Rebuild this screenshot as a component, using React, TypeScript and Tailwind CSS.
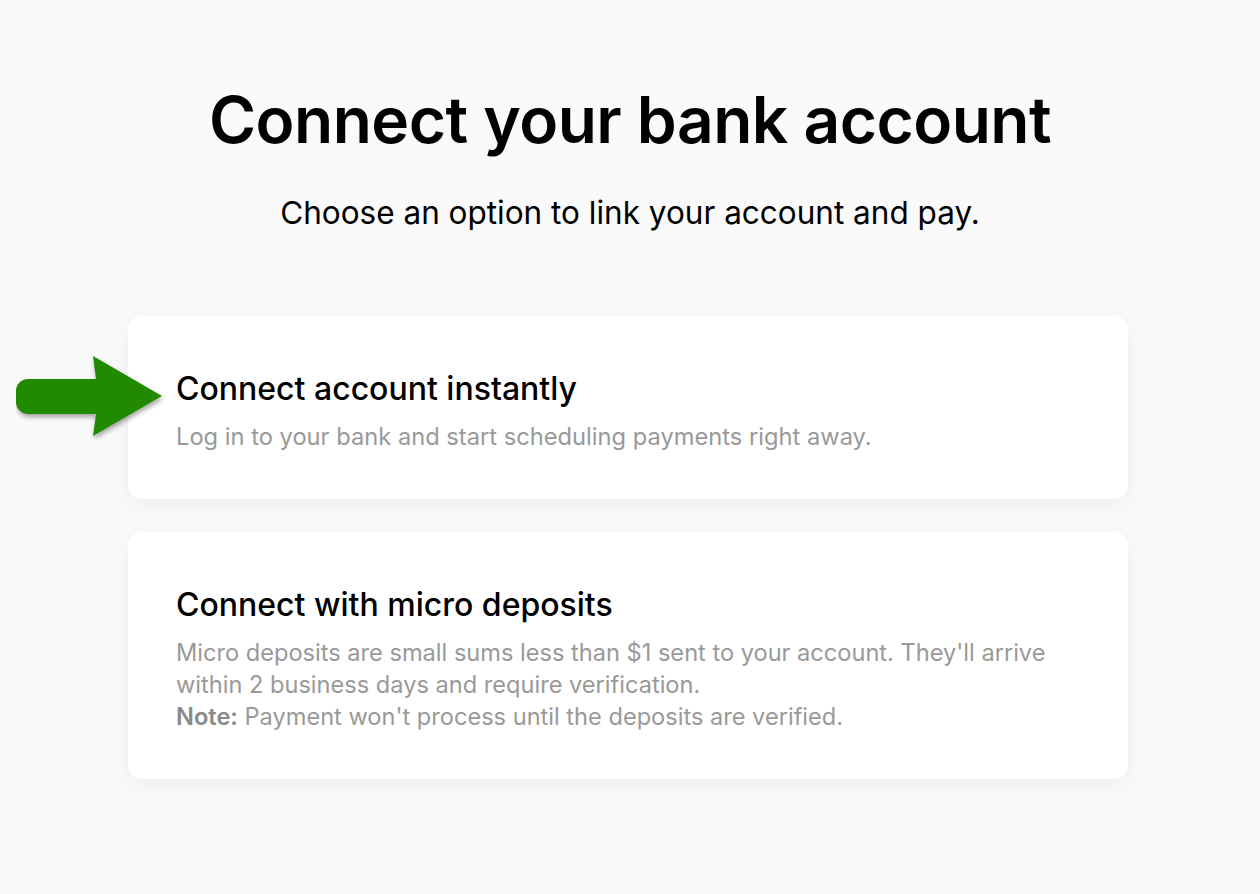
export default function App() {
  return (
    <div className="min-h-[894px] w-full bg-[#fafafa] font-['Inter','Noto_Sans',sans-serif] relative">
      <div className="flex flex-col items-center pt-[80px]">
        <h1 className="text-[64px] leading-[80px] font-semibold text-black tracking-[-0.5px]">
          Connect your bank account
        </h1>
        <p className="mt-[33px] text-[31.5px] leading-[40px] text-black">
          Choose an option to link your account and pay.
        </p>

        <div className="mt-[83px] mr-[4px] w-[1000px] flex flex-col gap-[33px]">
          <div className="relative bg-white rounded-[14px] shadow-[0_6px_24px_rgba(0,0,0,0.06)] px-[48px] pt-[54px] pb-[46px]">
            <Arrow />
            <h2 className="text-[32px] leading-[38px] font-medium text-black">
              Connect account instantly
            </h2>
            <p className="mt-[13px] text-[23.7px] leading-[32px] text-[#999]">
              Log in to your bank and start scheduling payments right away.
            </p>
          </div>

          <div className="bg-white rounded-[14px] shadow-[0_6px_24px_rgba(0,0,0,0.06)] px-[48px] pt-[54px] pb-[46px]">
            <h2 className="text-[32px] leading-[38px] font-medium text-black">
              Connect with micro deposits
            </h2>
            <p className="mt-[13px] text-[23.6px] leading-[32px] text-[#999]">
              Micro deposits are small sums less than $1 sent to your account. They'll arrive
              <br />
              within 2 business days and require verification.
              <br />
              <span className="font-semibold text-[#8a8a8a]">Note:</span> Payment won't process until the deposits are verified.
            </p>
          </div>
        </div>
      </div>
    </div>
  );
}

function Arrow() {
  return (
    <svg
      className="absolute left-[-112px] top-[36px]"
      width="154"
      height="90"
      viewBox="0 0 154 90"
    >
      <defs>
        <filter id="sh" x="-20%" y="-20%" width="140%" height="150%">
          <feDropShadow dx="1" dy="3" stdDeviation="2.5" floodColor="#000" floodOpacity="0.35" />
        </filter>
      </defs>
      <path
        d="M12 27 L80 27 L77 4 L146 44 L77 84 L80 62 L12 62 A12 12 0 0 1 0 50 L0 39 A12 12 0 0 1 12 27 Z"
        fill="#238a00"
        filter="url(#sh)"
      />
    </svg>
  );
}
